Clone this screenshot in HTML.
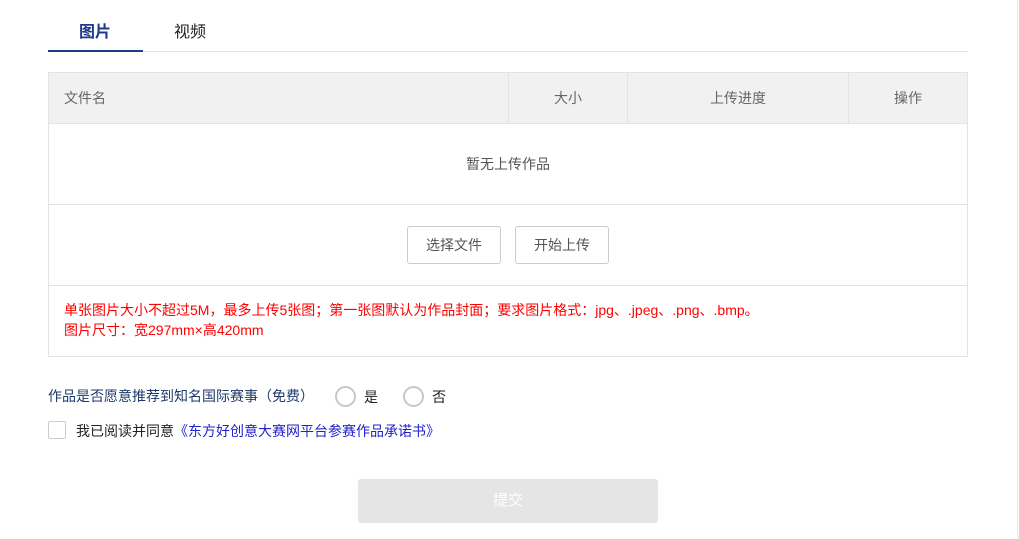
<!DOCTYPE html>
<html><head><meta charset="utf-8"><style>
*{margin:0;padding:0;box-sizing:border-box}
body{width:1019px;height:539px;background:#fff;font-family:"Liberation Sans","Noto Sans CJK SC",sans-serif;position:relative;overflow:hidden;font-size:13px;color:#333}
.a{position:absolute}
.tab{font-size:16px;top:18px}
.btn{position:absolute;top:226px;width:94px;height:38px;border:1px solid #ccc;border-radius:3px;text-align:center;line-height:36px;font-size:13px;color:#555;background:#fff}
.radio{position:absolute;width:21px;height:21px;border:2px solid #c8c8c8;border-radius:50%;top:386px}
</style></head><body>
<div class="a" style="right:1px;top:0;width:1px;height:539px;background:#e8e8e8"></div>
<div class="a tab" style="left:79px;color:#1e3a8a;font-weight:bold">图片</div>
<div class="a tab" style="left:174px;color:#222">视频</div>
<div class="a" style="left:48px;top:51px;width:920px;height:1px;background:#e3e3e3"></div>
<div class="a" style="left:48px;top:50px;width:95px;height:2px;background:#1e3a8a"></div>

<div class="a" style="left:48px;top:72px;width:920px;height:285px;border:1px solid #e3e3e3"></div>
<div class="a" style="left:49px;top:73px;width:918px;height:51px;background:#f1f1f1;border-bottom:1px solid #e3e3e3"></div>
<div class="a" style="left:508px;top:73px;width:1px;height:50px;background:#e3e3e3"></div>
<div class="a" style="left:627px;top:73px;width:1px;height:50px;background:#e3e3e3"></div>
<div class="a" style="left:848px;top:73px;width:1px;height:50px;background:#e3e3e3"></div>
<div class="a" style="left:64px;top:88px;color:#666;font-size:14px">文件名</div>
<div class="a" style="left:554px;top:88px;color:#666;font-size:14px">大小</div>
<div class="a" style="left:710px;top:88px;color:#666;font-size:14px">上传进度</div>
<div class="a" style="left:894px;top:88px;color:#666;font-size:14px">操作</div>
<div class="a" style="left:466px;top:154px;color:#555;font-size:14px">暂无上传作品</div>
<div class="a" style="left:49px;top:204px;width:918px;height:1px;background:#e3e3e3"></div>
<div class="btn" style="left:407px;font-size:14px">选择文件</div>
<div class="btn" style="left:515px;font-size:14px">开始上传</div>
<div class="a" style="left:49px;top:285px;width:918px;height:1px;background:#e3e3e3"></div>
<div class="a" style="left:64px;top:300px;color:#f00;line-height:20px;font-size:14px">单张图片大小不超过5M，最多上传5张图；第一张图默认为作品封面；要求图片格式：jpg、.jpeg、.png、.bmp。<br>图片尺寸：宽297mm×高420mm</div>

<div class="a" style="left:48px;top:386px;color:#1e3a6a;font-size:14px">作品是否愿意推荐到知名国际赛事（免费）</div>
<div class="radio" style="left:335px"></div>
<div class="a" style="left:364px;top:387px;color:#222;font-size:14px">是</div>
<div class="radio" style="left:403px"></div>
<div class="a" style="left:432px;top:387px;color:#222;font-size:14px">否</div>
<div class="a" style="left:48px;top:421px;width:18px;height:18px;border:1px solid #ccc;border-radius:2px"></div>
<div class="a" style="left:76px;top:421px;color:#222;font-size:14px">我已阅读并同意<span style="color:#22c">《东方好创意大赛网平台参赛作品承诺书》</span></div>

<div class="a" style="left:358px;top:479px;width:300px;height:44px;background:#e5e5e5;border-radius:3px;color:#fff;text-align:center;line-height:44px;font-size:15px">提交</div>
</body></html>
